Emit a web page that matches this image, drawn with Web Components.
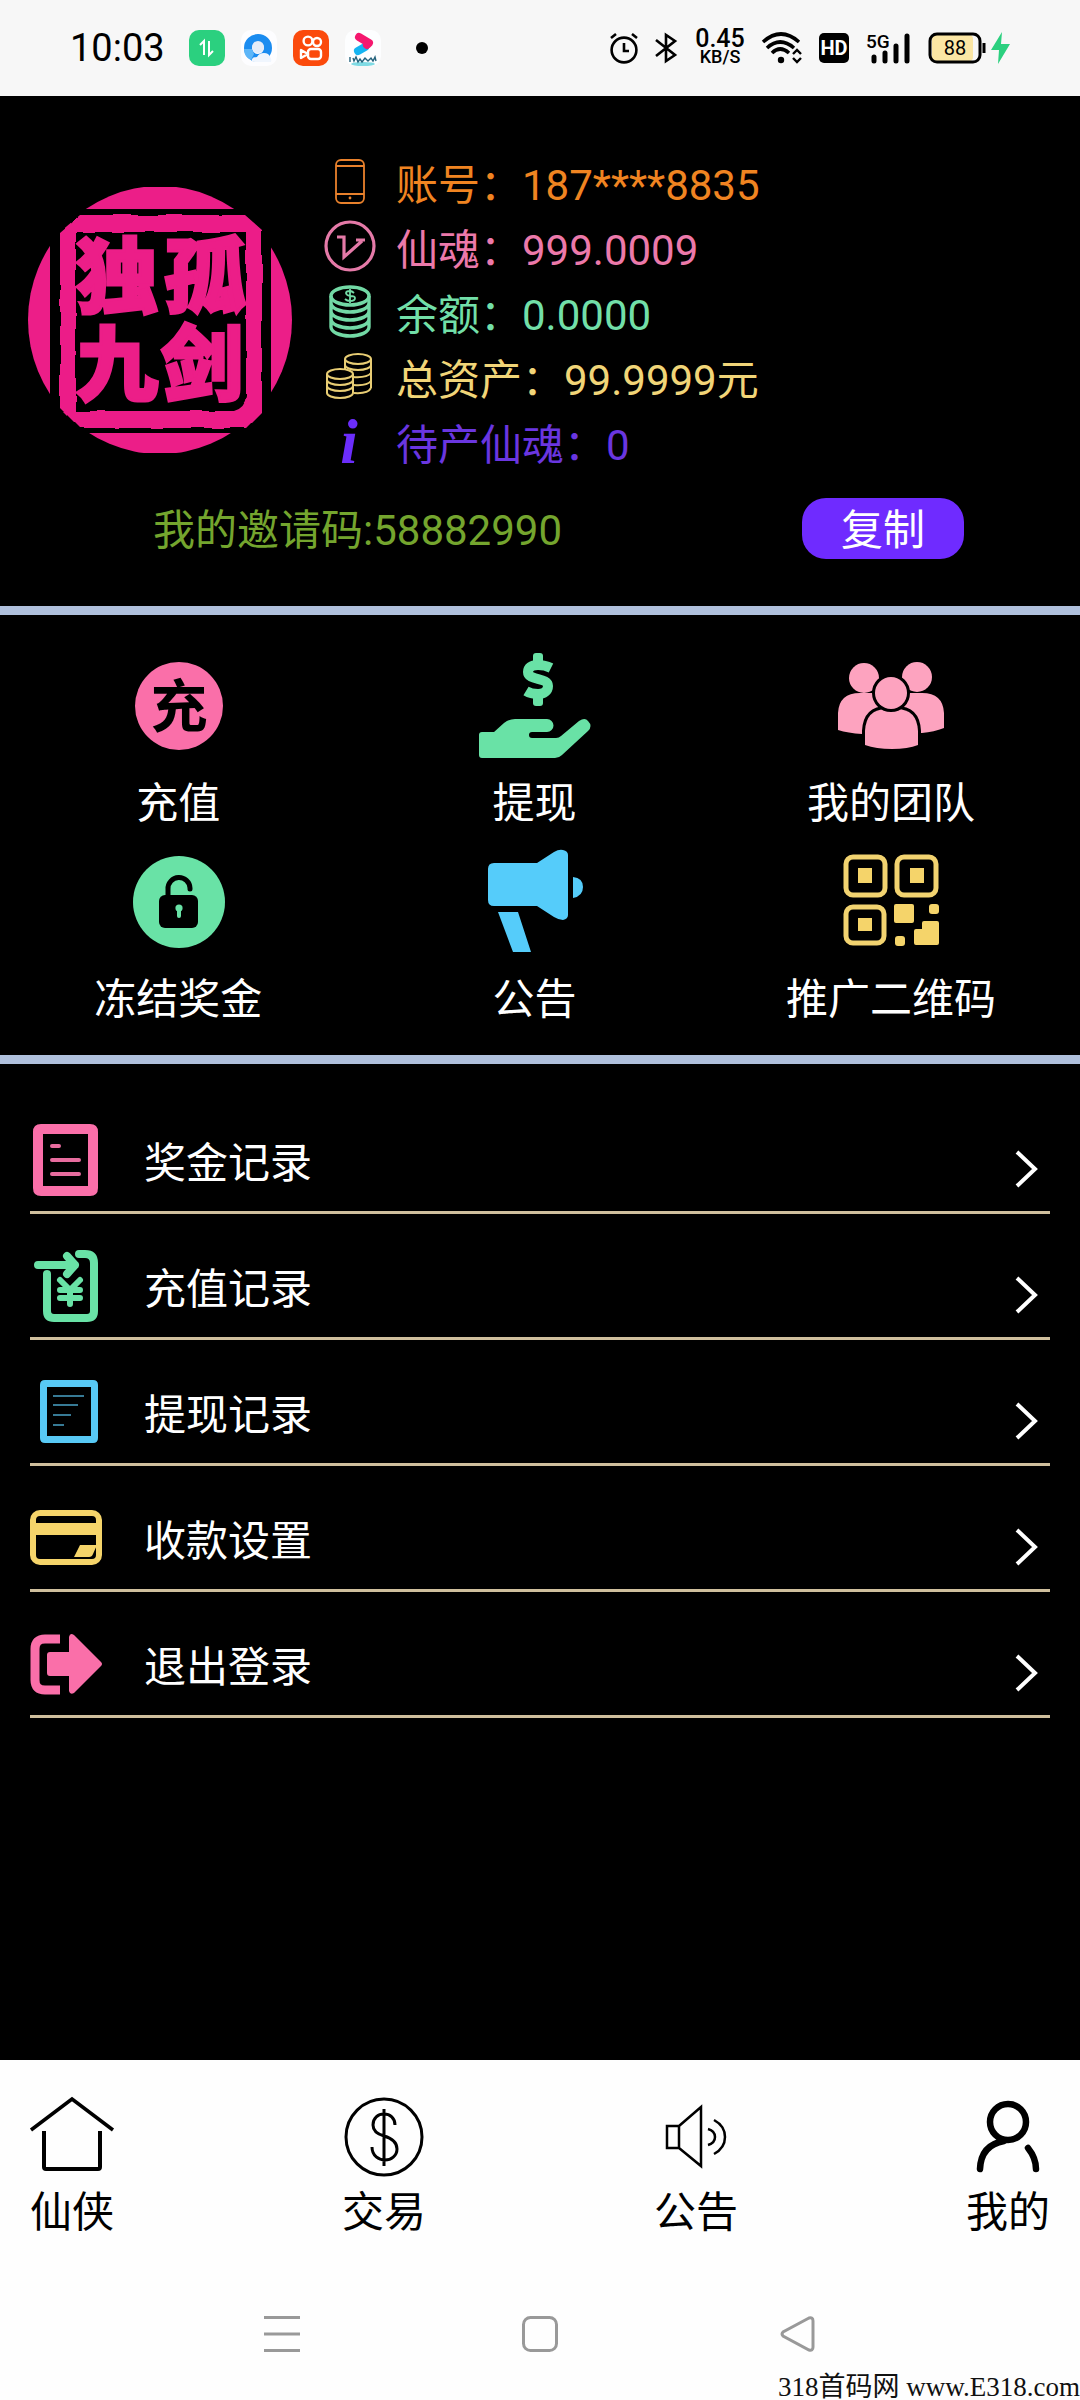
<!DOCTYPE html>
<html lang="zh-CN">
<head>
<meta charset="utf-8">
<meta name="viewport" content="width=device-width, initial-scale=1">
<title>我的</title>
<style>
    body {
        margin: 0;
        background: #000;
        font-family: Roboto, "Noto Sans CJK SC", sans-serif;
        font-size: 42px;
    }
</style>
</head>
<body>
<mine-page></mine-page>

<script>
// name -> [width, height, svg content]
const ICONS = {
    // status bar
    transfer: [36, 36, `<rect width="36" height="36" rx="10" fill="#2bd07f"/><path d="M11 15l4-4v14M20 11v14l4-4" fill="none" stroke="#fff" stroke-width="2"/>`],
    browser: [36, 36, `<rect width="36" height="36" rx="10" fill="#fdfdff"/><circle cx="17" cy="18" r="10" fill="none" stroke="#1b8cf0" stroke-width="8"/><path d="M3 19q0 8 7 11l3-6-2-5z" fill="#5db6f8"/><circle cx="17" cy="17" r="6" fill="#e4ecf8"/><path d="M14 32q-4 0-3-3 1-2 5-2 2-4 7-4 5 0 6 4 2 2 1 5z" fill="#f0f6fe"/>`],
    video: [36, 36, `<rect width="36" height="36" rx="10" fill="#fb4a0c"/><g fill="none" stroke="#fff" stroke-width="2.4"><circle cx="15" cy="11" r="4.4"/><circle cx="24" cy="12" r="4"/><rect x="15" y="19" width="13" height="10" rx="3"/><path d="M15 24l-7-4v8z" stroke-linejoin="round"/></g>`],
    play: [36, 36, `<rect width="36" height="36" rx="10" fill="#fdfeff"/><path d="M13 21l7-4" stroke="#14b4f2" stroke-width="8" stroke-linecap="round"/><path d="M14 7l10 6-2 2" stroke="#f5186f" stroke-width="8" stroke-linecap="round" fill="none" stroke-linejoin="round"/><ellipse cx="18" cy="34" rx="12" ry="2" fill="#7fdbe4"/><path d="M5 27v5M8 28l1 3 2-4 2 5 2-3 2 3 3-4 3 3 3-3 2 3 2-4 1 4" stroke="#24627c" stroke-width="1.4" fill="none"/>`],
    alarm: [28, 32, `<g fill="none" stroke="#000" stroke-width="2.6"><circle cx="14" cy="18" r="12.4"/><path d="M14 11v8h5"/><path d="M1 6l5-4M27 6l-5-4"/></g>`],
    bluetooth: [23, 30, `<path d="M1 7l19 15-9 6V2l9 6L1 23" fill="none" stroke="#000" stroke-width="2.6"/>`],
    wifi: [40, 32, `<g fill="none" stroke="#000" stroke-width="3.6"><path d="M1 10q18-16 36 0"/><path d="M5 16q13-12 27 0"/><path d="M10 21q8-8 17 0"/></g><circle cx="19" cy="28" r="3.2"/><path d="M31 22l4-4 4 4M31 26l4 4 4-4" fill="none" stroke="#000" stroke-width="2.4"/>`],
    signal: [45, 32, `<text x="0" y="16" font-size="19" font-weight="500">5G</text><g stroke="#000" stroke-width="5" stroke-linecap="round"><path d="M8 25v4M19 21v8M30 14v15M41 4v25"/></g>`],
    battery: [83, 32, `<rect x="4" y="3" width="41" height="26" rx="4" fill="#fbe6a4"/><rect x="2" y="2" width="50" height="28" rx="7" fill="none" stroke="#000" stroke-width="3"/><path d="M56 11v10" stroke="#000" stroke-width="3"/><text x="27" y="23" font-size="20" text-anchor="middle">88</text><path d="M74 0L63 18h8l-1 14 12-20h-9z" fill="#2bd07f"/>`],

    // account stats
    phone: [52, 56, `<g fill="none" stroke="#e9812c" stroke-width="1.8"><rect x="13" y="7" width="28" height="43" rx="5"/><path d="M13 13h28M13 41h28"/></g><circle cx="27" cy="45" r="1.4" fill="#e9812c"/>`],
    soul: [52, 56, `<g fill="none" stroke="#e57aa8" stroke-width="3.2"><circle cx="27" cy="28" r="24"/><path d="M14 19h7v20l18-16M33 22h9"/></g>`],
    balance: [52, 56, `<g fill="none" stroke="#72d9a5" stroke-width="3.4"><ellipse cx="27" cy="13" rx="19" ry="9"/><path d="M8 13v31M46 13v31M8 20a19 9 0 0 0 38 0M8 28a19 9 0 0 0 38 0M8 36a19 9 0 0 0 38 0M8 44a19 9 0 0 0 38 0"/></g><path d="M31 10q-2-2-4-2-4 0-4 2 0 2 4 3 5 0 5 2 0 3-5 3-3 0-5-2M27 6v14" fill="none" stroke="#72d9a5" stroke-width="1.8"/>`],
    assets: [52, 56, `<g fill="none" stroke="#e8cd74" stroke-width="2"><ellipse cx="35" cy="11" rx="13" ry="5"/><path d="M22 11v10M48 11v29M22 17a13 5 0 0 0 26 0M30 29q14 1 18-4M31 37q13 1 17-4M31 45q14 1 17-5"/><ellipse cx="17" cy="26" rx="13" ry="5"/><path d="M4 26v19M30 26v19M4 32a13 5 0 0 0 26 0M4 38a13 5 0 0 0 26 0M4 45a13 5 0 0 0 26 0"/></g>`],
    info: [52, 56, `<text x="26" y="50" font-family="Liberation Serif, serif" font-size="63" font-weight="700" font-style="italic" text-anchor="middle" fill="#6b2dfb">i</text>`],

    // quick actions
    recharge: [112, 112, `<circle cx="57" cy="57" r="44" fill="#fa6fa9"/><text x="57" y="78" font-size="57" font-weight="700" text-anchor="middle">充</text>`],
    withdraw: [112, 112, `<g fill="#69e2a6"><path d="M0 86q0-3 3-3h12l10-9q5-4 11-4h32a6.500 6.500 0 0 1 0 13H53a3 3 0 0 0 0 6h24q3 0 5-2l18-15q6-4 9 0 5 5 0 10L83 106q-3 3-7 3H3q-3 0-3-3z"/><rect x="54" y="4" width="10" height="14" rx="3"/><rect x="54" y="43" width="10" height="14" rx="3"/></g><path d="M72 19q-6-3-13-3c-7 0-10 3-10 7 0 9 20 5 20 14 0 5-4 8-10 8q-7 0-12-3" fill="none" stroke="#69e2a6" stroke-width="10"/>`],
    team: [112, 112, `<g fill="#fda3bf"><circle cx="29" cy="29" r="15"/><circle cx="82" cy="28" r="15"/><path d="M3 81V64q1-20 22-20h18v41h-16q-14-1-24-4zM109 79V64q-1-20-22-20H69v40h18q12-1 22-5z"/><g stroke="#000" stroke-width="6" paint-order="stroke"><path d="M30 96V82q1-22 22-22h9q21 0 22 22v14q-10 4-26 4t-27-4z"/><circle cx="56" cy="44" r="16"/></g></g>`],
    frozen: [112, 112, `<circle cx="57" cy="57" r="46" fill="#69e2a6"/><rect x="37" y="50" width="39" height="33" rx="6"/><path d="M46 52v-8a11 11 0 0 1 22-1v1" fill="none" stroke="#000" stroke-width="5" stroke-linecap="round"/><circle cx="57" cy="63" r="3.6" fill="#69e2a6"/><path d="M57 64v7" stroke="#69e2a6" stroke-width="4" stroke-linecap="round"/>`],
    notice: [112, 112, `<path d="M9 24q0-6 6-6h43l17-11q5-3 9-2 5 1 5 5v60q0 4-5 5-4 0-9-3L58 61H15q-6 0-6-6zM94 32q10 1 10 10T94 53zM19 67h20l13 40H34z" fill="#55ccfa"/>`],
    qrcode: [112, 112, `<g fill="none" stroke="#f2d370" stroke-width="5"><rect x="11" y="12" width="39" height="38" rx="7"/><rect x="62" y="12" width="39" height="38" rx="7"/><rect x="11" y="62" width="38" height="36" rx="7"/></g><g fill="#f5d46a"><path d="M23 23h14v15H23zM75 23h14v15H75zM23 73h14v13H23z"/><rect x="59" y="59" width="20" height="19" rx="2"/><rect x="94" y="59" width="10" height="10" rx="3"/><rect x="60" y="91" width="10" height="10" rx="3"/><path d="M79 86q0-2 2-2h6v-6q0-2 2-2h13q2 0 2 2v20q0 2-2 2H81q-2 0-2-2z"/></g>`],

    // records
    bonus: [72, 72, `<path d="M11 0h49q8 0 8 8v56q0 8-8 8H11q-8 0-8-8V8q0-8 8-8zm2 10v52h45V10z" fill="#fa6fa9" fill-rule="evenodd"/><path d="M22 22h7M22 36h27M22 50h27" stroke="#e76c9e" stroke-width="4" stroke-linecap="round"/>`],
    deposit: [72, 72, `<g fill="none" stroke="#69e2a6" stroke-linecap="round" stroke-linejoin="round"><path stroke-width="8" d="M8 15h37M37 6l8 9-8 9M49 4h6q9 0 9 9v48q0 7-7 7H24q-7 0-7-7V24"/><path stroke-width="6" d="M30 30l10 10 10-10M30 40h20M30 48h20M40 40v14"/></g>`],
    payout: [72, 72, `<path d="M15 4h48q5 0 5 5v53q0 5-5 5H15q-5 0-5-5V9q0-5 5-5zm2 7v49h44V11z" fill="#58c9f5" fill-rule="evenodd"/><path d="M23 20h31M23 29h25M23 39h18M23 49h11" stroke="#4aa3c6" stroke-width="1.5"/>`],
    card: [72, 72, `<rect x="3" y="11" width="66" height="49" rx="7" fill="none" stroke="#f5d46a" stroke-width="6"/><path d="M4 21h64v12H4zM50 43h17l-4 9q-1 3-4 3H44z" fill="#f5d46a"/>`],
    logout: [72, 72, `<path d="M30 11H15Q5 11 5 21v31q0 10 10 10h15" fill="none" stroke="#fa6fa9" stroke-width="9"/><path d="M17 27q0-3 3-3h19V9q1-5 5-2l27 27q2 2 0 4L44 65q-4 2-5-2V48H20q-3 0-3-3z" fill="#fa6fa9"/>`],
    chevron: [24, 40, `<path d="M3 3l18 17L3 37" fill="none" stroke="#fff" stroke-width="4"/>`],

    // tabs
    home: [84, 84, `<g fill="none" stroke="#000"><path d="M1 36L42 5l41 31" stroke-width="3.5"/><path d="M14 37v36q0 2 2 2h52q2 0 2-2V37" stroke-width="4"/></g>`],
    trade: [84, 84, `<g fill="none" stroke="#000" stroke-width="3"><circle cx="42" cy="43" r="38"/><path d="M53 31c0-7-5-11-11-11s-11 4-11 11c0 6 4 9 11 11s13 5 13 13c0 7-6 11-12 11s-13-4-13-13M42 15v57"/></g>`],
    speaker: [84, 84, `<path d="M13 32h12v22H13zM25 32l22-19v59L25 54M54 35q7 2 7 8t-7 8M60 26q11 6 11 17t-11 17" fill="none" stroke="#000" stroke-width="2.5"/>`],
    person: [84, 84, `<g fill="none" stroke="#000" stroke-width="6.5" stroke-linecap="round"><circle cx="42" cy="28" r="18"/><path d="M14 75q1-24 24-28M62 54q8 10 8 21"/></g>`],

    // system keys
    menu: [36, 36, `<path d="M0 1.500h36M0 18h36M0 34.500h36" stroke="#999" stroke-width="3"/>`],
    square: [36, 36, `<rect x="1.500" y="1.500" width="33" height="33" rx="7" fill="none" stroke="#999" stroke-width="3"/>`],
    back: [36, 36, `<path d="M29 2L3 16q-2 2 0 4l26 14q4 1 4-3V5q0-4-4-3z" fill="none" stroke="#999" stroke-width="3"/>`],
};

class AppIcon extends HTMLElement {
    constructor() {
        super();
        this.attachShadow({ mode: 'open' });
    }
    connectedCallback() {
        const [w, h, shape] = ICONS[this.getAttribute('name')];
        this.shadowRoot.innerHTML = `
            <style>
                :host { display: block; flex: none; }
                svg { display: block; overflow: visible; }
            </style>
            <svg width="${w}" height="${h}" viewBox="0 0 ${w} ${h}" aria-hidden="true">${shape}</svg>
        `;
    }
}
customElements.define('app-icon', AppIcon);

class StatusBar extends HTMLElement {
    constructor() {
        super();
        this.attachShadow({ mode: 'open' });
        this.shadowRoot.innerHTML = `
            <style>
                :host {
                    display: flex;
                    justify-content: space-between;
                    align-items: center;
                    height: 96px;
                    padding: 0 69px 0 70px;
                    background: #f7f7f7;
                    color: #000;
                }
                .left, .right {
                    display: flex;
                    align-items: center;
                }
                .left { gap: 16px; }
                .right { gap: 17px; }
                .time {
                    font-size: 38px;
                    margin-right: 8px;
                }
                .dot {
                    width: 12px;
                    height: 12px;
                    border-radius: 50%;
                    background: #000;
                    margin-left: 19px;
                }
                .speed {
                    width: 50px;
                    text-align: center;
                    font-size: 25px;
                    font-weight: 500;
                    line-height: 18px;
                }
                .speed small {
                    display: block;
                    font-size: 18px;
                    line-height: 18px;
                }
                .hd {
                    width: 30px;
                    line-height: 30px;
                    border-radius: 5px;
                    background: #000;
                    color: #fff;
                    font-size: 20px;
                    font-weight: 700;
                    text-align: center;
                }
            </style>
            <div class="left">
                <span class="time">10:03</span>
                <app-icon name="transfer"></app-icon>
                <app-icon name="browser"></app-icon>
                <app-icon name="video"></app-icon>
                <app-icon name="play"></app-icon>
                <span class="dot"></span>
            </div>
            <div class="right">
                <app-icon name="alarm"></app-icon>
                <app-icon name="bluetooth"></app-icon>
                <div class="speed">0.45<small>KB/S</small></div>
                <app-icon name="wifi"></app-icon>
                <span class="hd">HD</span>
                <app-icon name="signal"></app-icon>
                <app-icon name="battery"></app-icon>
            </div>
        `;
    }
}
customElements.define('status-bar', StatusBar);

class SealAvatar extends HTMLElement {
    constructor() {
        super();
        this.attachShadow({ mode: 'open' });
        this.shadowRoot.innerHTML = `
            <style>
                :host { display: block; flex: none; }
                svg { display: block; }
                text {
                    font: 900 82px "Noto Sans CJK SC", sans-serif;
                    fill: #ec1e88;
                    stroke: #ec1e88;
                    stroke-width: 3px;
                }
            </style>
            <svg width="264" height="266" viewBox="0 0 264 266">
                <!-- worn edge of the carved stamp -->
                <filter id="worn" x="-5%" y="-5%" width="110%" height="110%">
                    <feTurbulence type="fractalNoise" baseFrequency="0.05" numOctaves="1" seed="4"/>
                    <feDisplacementMap in="SourceGraphic" scale="5" xChannelSelector="R" yChannelSelector="G"/>
                </filter>
                <ellipse cx="132" cy="133" rx="132" ry="134" fill="#ec1e88"/>
                <path d="M22 22h221v224H22z"/>
                <path d="M52 28h165l17 15v182l-16 16H52L32 221V45zM48 45v179h158q11-3 12-14V45z" fill="#ec1e88" fill-rule="evenodd" filter="url(#worn)"/>
                <text x="48" y="119">独</text>
                <text x="136" y="119">孤</text>
                <text x="48" y="207">九</text>
                <text x="133" y="207">剑</text>
            </svg>
        `;
    }
}
customElements.define('seal-avatar', SealAvatar);

class UserStat extends HTMLElement {
    constructor() {
        super();
        this.attachShadow({ mode: 'open' });
    }
    connectedCallback() {
        this.shadowRoot.innerHTML = `
            <style>
                :host {
                    display: flex;
                    gap: 21px;
                    line-height: 65px;
                    white-space: nowrap;
                }
            </style>
            <app-icon name="${this.getAttribute('icon')}"></app-icon>
            <span><slot></slot></span>
        `;
    }
}
customElements.define('user-stat', UserStat);

class ProfileCard extends HTMLElement {
    constructor() {
        super();
        this.attachShadow({ mode: 'open' });
        this.shadowRoot.innerHTML = `
            <style>
                :host {
                    display: block;
                    padding: 57px 0 43px;
                    border-bottom: 9px solid #afc0dc;
                }
                .user {
                    display: flex;
                    gap: 31px;
                    padding-left: 28px;
                }
                seal-avatar { margin-top: 34px; }
                .invite {
                    display: flex;
                    justify-content: space-between;
                    align-items: flex-start;
                    margin-top: 20px;
                    padding: 0 116px 0 153px;
                    color: #74a52e;
                    line-height: 65px;
                }
                button {
                    width: 162px;
                    height: 61px;
                    padding: 4px 0 0;
                    border: 0;
                    border-radius: 24px;
                    background: #6f2bff;
                    color: #fff;
                    font: inherit;
                    line-height: 56px;
                }
            </style>
            <div class="user">
                <seal-avatar></seal-avatar>
                <div>
                    <user-stat icon="phone" style="color: #f08421">账号：187****8835</user-stat>
                    <user-stat icon="soul" style="color: #ec79aa">仙魂：999.0009</user-stat>
                    <user-stat icon="balance" style="color: #72dfa8">余额：0.0000</user-stat>
                    <user-stat icon="assets" style="color: #f1d578">总资产：99.9999元</user-stat>
                    <user-stat icon="info" style="color: #6a36e0">待产仙魂：0</user-stat>
                </div>
            </div>
            <div class="invite">
                <span>我的邀请码:58882990</span>
                <button type="button">复制</button>
            </div>
        `;
    }
}
customElements.define('profile-card', ProfileCard);

class QuickAction extends HTMLElement {
    constructor() {
        super();
        this.attachShadow({ mode: 'open' });
    }
    connectedCallback() {
        this.shadowRoot.innerHTML = `
            <style>
                :host { display: block; }
                a {
                    display: flex;
                    flex-direction: column;
                    align-items: center;
                    gap: 16px;
                    color: #fff;
                    line-height: 54px;
                    text-decoration: none;
                    white-space: nowrap;
                }
            </style>
            <a href="#${this.getAttribute('icon')}">
                <app-icon name="${this.getAttribute('icon')}"></app-icon>
                <span><slot></slot></span>
            </a>
        `;
    }
}
customElements.define('quick-action', QuickAction);

class QuickActions extends HTMLElement {
    constructor() {
        super();
        this.attachShadow({ mode: 'open' });
        this.shadowRoot.innerHTML = `
            <style>
                :host {
                    display: grid;
                    grid-template-columns: repeat(3, 33%);
                    row-gap: 14px;
                    padding: 34px 0 28px;
                    border-bottom: 9px solid #afc0dc;
                }
            </style>
            <quick-action icon="recharge">充值</quick-action>
            <quick-action icon="withdraw">提现</quick-action>
            <quick-action icon="team">我的团队</quick-action>
            <quick-action icon="frozen">冻结奖金</quick-action>
            <quick-action icon="notice">公告</quick-action>
            <quick-action icon="qrcode">推广二维码</quick-action>
        `;
    }
}
customElements.define('quick-actions', QuickActions);

class MenuRow extends HTMLElement {
    constructor() {
        super();
        this.attachShadow({ mode: 'open' });
    }
    connectedCallback() {
        this.shadowRoot.innerHTML = `
            <style>
                :host { display: block; }
                a {
                    display: flex;
                    align-items: flex-start;
                    padding: 36px 12px 7px 0;
                    border-bottom: 3px solid #cfbf9d;
                    color: #fff;
                    line-height: 80px;
                    text-decoration: none;
                }
                span {
                    flex: 1;
                    margin-left: 42px;
                }
                .go { margin-top: 25px; }
            </style>
            <a href="#${this.getAttribute('icon')}">
                <app-icon name="${this.getAttribute('icon')}"></app-icon>
                <span><slot></slot></span>
                <app-icon class="go" name="chevron"></app-icon>
            </a>
        `;
    }
}
customElements.define('menu-row', MenuRow);

class MenuList extends HTMLElement {
    constructor() {
        super();
        this.attachShadow({ mode: 'open' });
        this.shadowRoot.innerHTML = `
            <style>
                :host {
                    display: block;
                    padding: 24px 30px;
                }
            </style>
            <menu-row icon="bonus">奖金记录</menu-row>
            <menu-row icon="deposit">充值记录</menu-row>
            <menu-row icon="payout">提现记录</menu-row>
            <menu-row icon="card">收款设置</menu-row>
            <menu-row icon="logout">退出登录</menu-row>
        `;
    }
}
customElements.define('menu-list', MenuList);

class TabItem extends HTMLElement {
    constructor() {
        super();
        this.attachShadow({ mode: 'open' });
    }
    connectedCallback() {
        this.shadowRoot.innerHTML = `
            <style>
                :host { display: block; }
                a {
                    display: flex;
                    flex-direction: column;
                    align-items: center;
                    gap: 8px;
                    color: #000;
                    line-height: 54px;
                    text-decoration: none;
                }
            </style>
            <a href="#${this.getAttribute('icon')}">
                <app-icon name="${this.getAttribute('icon')}"></app-icon>
                <span><slot></slot></span>
            </a>
        `;
    }
}
customElements.define('tab-item', TabItem);

class TabBar extends HTMLElement {
    constructor() {
        super();
        this.attachShadow({ mode: 'open' });
        this.shadowRoot.innerHTML = `
            <style>
                :host {
                    display: flex;
                    justify-content: space-between;
                    padding: 34px 30px 26px;
                    background: #fefefe;
                }
            </style>
            <tab-item icon="home">仙侠</tab-item>
            <tab-item icon="trade">交易</tab-item>
            <tab-item icon="speaker">公告</tab-item>
            <tab-item icon="person">我的</tab-item>
        `;
    }
}
customElements.define('tab-bar', TabBar);

class SystemNav extends HTMLElement {
    constructor() {
        super();
        this.attachShadow({ mode: 'open' });
        this.shadowRoot.innerHTML = `
            <style>
                :host {
                    position: relative;
                    display: flex;
                    justify-content: center;
                    gap: 222px;
                    padding: 50px 0 48px;
                    background: #fefefe;
                }
                button {
                    padding: 0;
                    border: 0;
                    background: none;
                }
                /* site mark lies over the corner of the bar */
                .mark {
                    position: absolute;
                    right: 0;
                    bottom: 0;
                    color: #111;
                    font: 27px/26px "Liberation Serif", "Noto Sans CJK SC", serif;
                    white-space: nowrap;
                }
            </style>
            <button type="button" aria-label="menu"><app-icon name="menu"></app-icon></button>
            <button type="button" aria-label="home"><app-icon name="square"></app-icon></button>
            <button type="button" aria-label="back"><app-icon name="back"></app-icon></button>
            <div class="mark">318首码网 www.E318.com</div>
        `;
    }
}
customElements.define('system-nav', SystemNav);

class MinePage extends HTMLElement {
    constructor() {
        super();
        this.attachShadow({ mode: 'open' });
        this.shadowRoot.innerHTML = `
            <style>
                :host {
                    display: flex;
                    flex-direction: column;
                    min-height: 100vh;
                    background: #000;
                }
                menu-list { flex: 1; }
            </style>
            <status-bar></status-bar>
            <profile-card></profile-card>
            <quick-actions></quick-actions>
            <menu-list></menu-list>
            <tab-bar></tab-bar>
            <system-nav></system-nav>
        `;
    }
}
customElements.define('mine-page', MinePage);
</script>
</body>
</html>
